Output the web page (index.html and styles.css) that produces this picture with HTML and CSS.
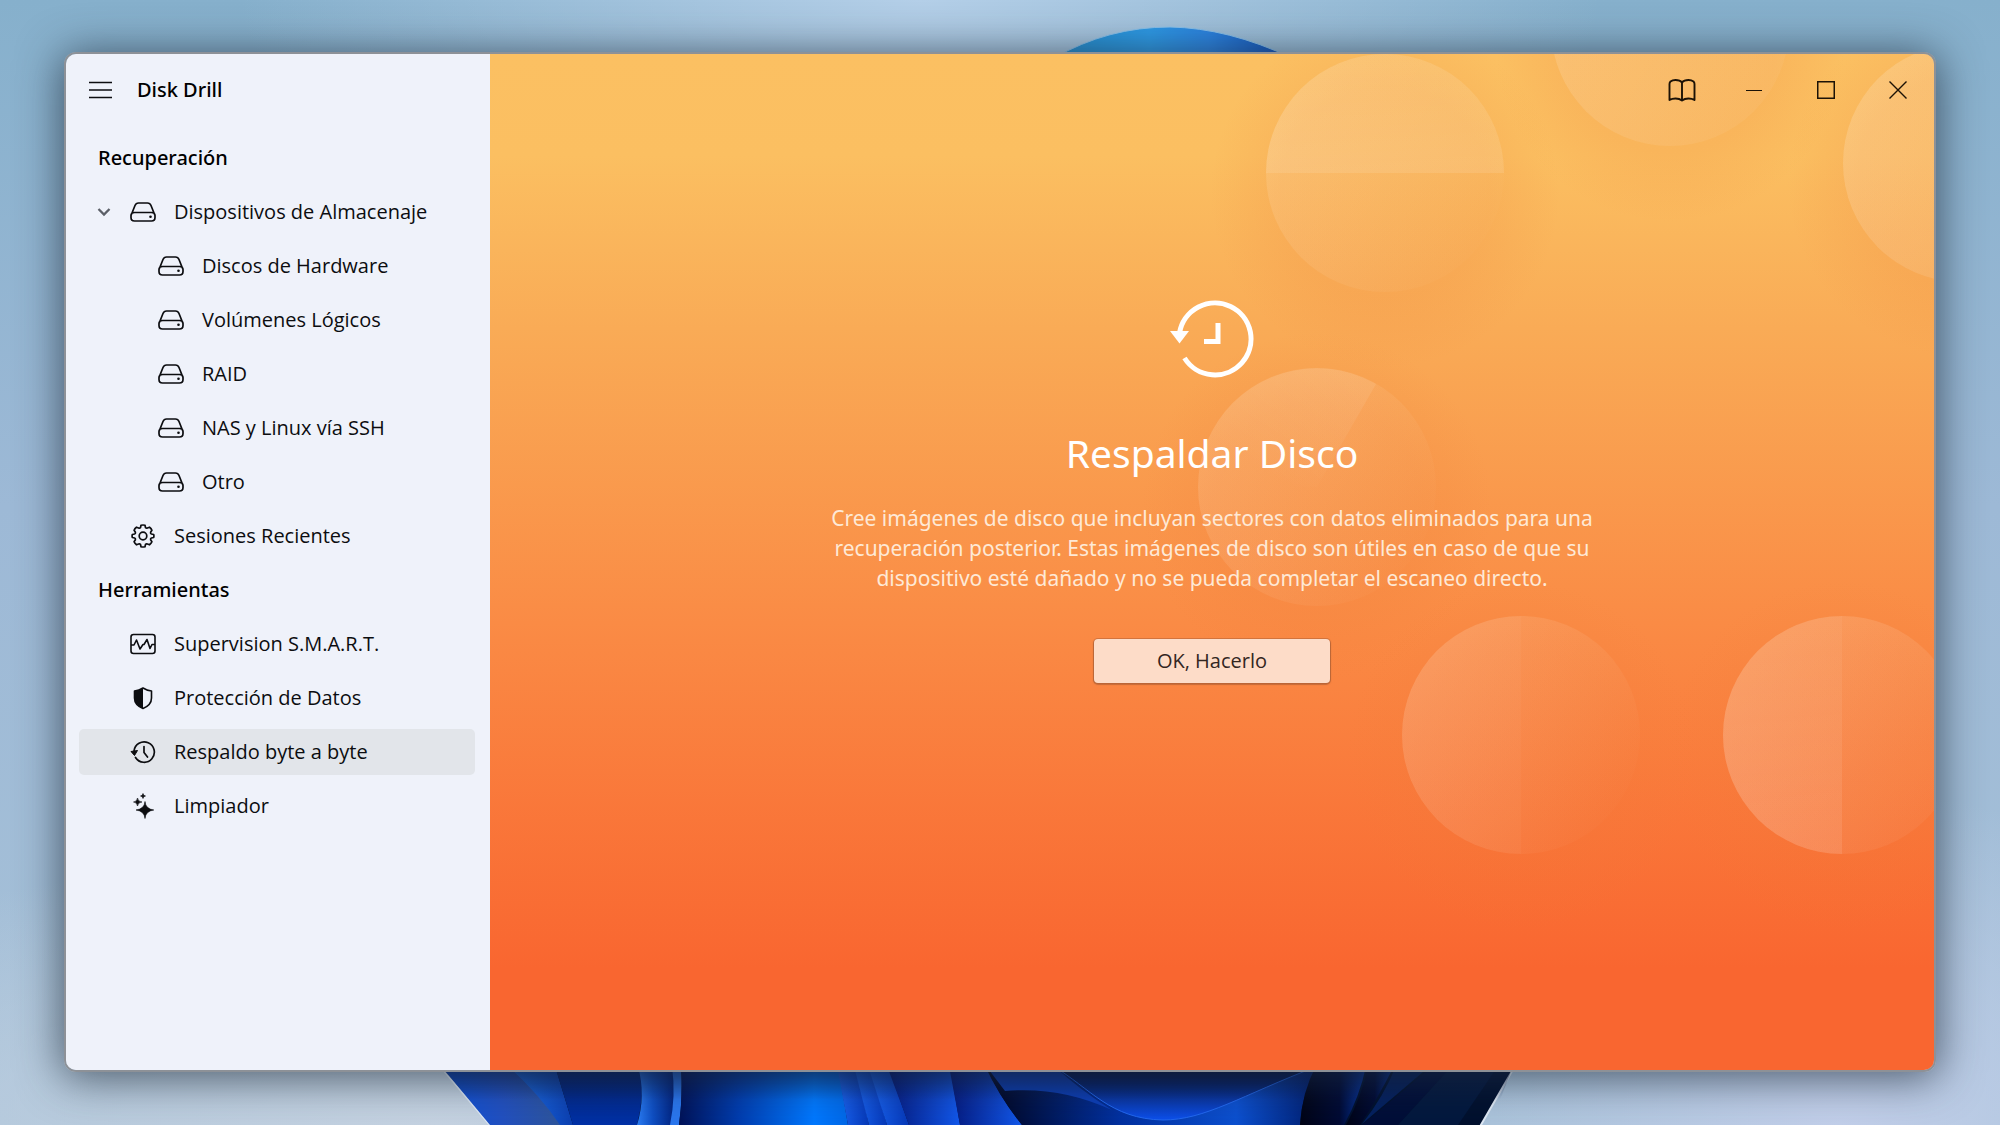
FILE: index.html
```html
<!DOCTYPE html>
<html lang="es">
<head>
<meta charset="utf-8">
<meta name="viewport" content="width=device-width, initial-scale=1">
<title>Disk Drill</title>
<link rel="stylesheet" href="styles.css">
</head>
<body>
<svg class="wallpaper" viewBox="0 0 2000 1125" preserveAspectRatio="xMidYMid slice" aria-hidden="true">
  <defs>
    <linearGradient id="crown"><stop offset="0" stop-color="#248fd0"/><stop offset=".4" stop-color="#2d9be8"/><stop offset=".65" stop-color="#2b84e2"/><stop offset="1" stop-color="#0f4bb4"/></linearGradient>
    <linearGradient id="leaf"><stop offset="0" stop-color="#0a50dc"/><stop offset=".5" stop-color="#2250c0"/><stop offset="1" stop-color="#2f5598"/></linearGradient>
    <linearGradient id="fold"><stop offset="0" stop-color="#1c74f4"/><stop offset="1" stop-color="#0c3fb0"/></linearGradient>
    <linearGradient id="deep" x2="0" y2="1"><stop offset="0" stop-color="#001f70"/><stop offset="1" stop-color="#0031a8"/></linearGradient>
    <linearGradient id="ribbon"><stop offset="0" stop-color="#2a7cf4"/><stop offset=".4" stop-color="#0f4fc4"/><stop offset="1" stop-color="#001e78"/></linearGradient>
    <linearGradient id="glow"><stop offset="0" stop-color="#011258"/><stop offset=".35" stop-color="#003cae"/><stop offset=".8" stop-color="#0078ff"/><stop offset="1" stop-color="#0068e8"/></linearGradient>
    <linearGradient id="pleat"><stop offset="0" stop-color="#1a66f4"/><stop offset="1" stop-color="#0638b8"/></linearGradient>
    <linearGradient id="pleatDark"><stop offset="0" stop-color="#04187c"/><stop offset="1" stop-color="#1258ec"/></linearGradient>
    <linearGradient id="bowl" x2="0" y2="1"><stop offset="0" stop-color="#010a2e"/><stop offset="1" stop-color="#0d50ee"/></linearGradient>
    <linearGradient id="under"><stop offset="0" stop-color="#00031c"/><stop offset=".4" stop-color="#0230a0"/><stop offset=".75" stop-color="#0c50d0"/><stop offset="1" stop-color="#001c6c"/></linearGradient>
    <linearGradient id="blade"><stop offset="0" stop-color="#000416"/><stop offset=".6" stop-color="#000a34"/><stop offset="1" stop-color="#0636a4"/></linearGradient>
    <linearGradient id="shade" x2="0" y2="1"><stop offset="0" stop-color="#001040" stop-opacity=".5"/><stop offset="1" stop-color="#001040" stop-opacity="0"/></linearGradient>
  </defs>
  <path d="M1054 58Q1108 27 1170 27Q1228 28 1292 58Z" fill="url(#crown)" stroke="#8cc4ee" stroke-width="1"/>
  <path d="M440 1066H1515L1478 1130H494Z" fill="#01102e" stroke="#dfe9f5" stroke-width="2"/>
  <path d="M441 1066H512L565 1125H490Z" fill="url(#leaf)"/>
  <path d="M508 1066H555L573 1125H560Q540 1095 508 1066Z" fill="url(#fold)"/>
  <path d="M555 1066H640Q645 1096 637 1125H573Z" fill="url(#deep)"/>
  <path d="M638 1066H674Q680 1096 672 1125H637Q646 1096 638 1066Z" fill="url(#ribbon)"/>
  <path d="M672 1066H681Q683 1096 679 1125H670Q676 1096 672 1066Z" fill="#2a76ee"/>
  <path d="M681 1066H838L848 1125H679Q683 1096 681 1066Z" fill="url(#glow)"/>
  <path d="M837 1066H856L869 1125H848Z" fill="url(#pleat)"/>
  <path d="M854 1066H870L887 1125H869Z" fill="url(#pleat)"/>
  <path d="M868 1066H888L909 1125H887Z" fill="url(#pleat)"/>
  <path d="M887 1066H950L960 1125H909Z" fill="url(#pleatDark)"/>
  <path d="M949 1066H986Q1000 1098 1022 1125H960Z" fill="url(#pleatDark)"/>
  <path d="M985 1066H1320Q1302 1090 1300 1125H1022Q1000 1098 985 1066Z" fill="url(#under)"/>
  <path d="M986 1066H1054Q1080 1090 1112 1110Q1060 1086 1005 1091Z" fill="#0c3eb8"/>
  <path d="M1053 1066H1318C1240 1096 1205 1120 1163 1120C1110 1119 1090 1088 1053 1066Z" fill="url(#bowl)" stroke="#2268f0" stroke-width="1"/>
  <path d="M1316 1066H1366Q1360 1096 1344 1125H1300Q1302 1092 1316 1066Z" fill="url(#blade)"/>
  <path d="M1368 1066H1394Q1378 1098 1360 1125H1346Q1362 1096 1368 1066Z" fill="url(#blade)"/>
  <path d="M1396 1066H1430L1362 1124Q1384 1096 1396 1066Z" fill="#04205e"/>
  <path d="M1452 1066L1398 1125H1362L1426 1072Z" fill="#010e38"/>
  <path d="M1452 1066H1498L1458 1125H1398Z" fill="#03183e"/>
  <path d="M440 1066H1513L1500 1100H470Z" fill="url(#shade)"/>
</svg>

<main class="window">
  <aside class="sidebar">
    <header class="brand">
      <button class="menu" type="button" aria-label="Menú">
        <svg width="24" height="18" viewBox="0 0 24 18"><path d="M0 1.500H23M0 9H23M0 16.500H23" fill="none" stroke="currentColor" stroke-width="1.600"/></svg>
      </button>
      <span class="brand-name">Disk Drill</span>
    </header>

    <svg class="sprite" aria-hidden="true">
      <symbol id="drive" viewBox="0 0 26 20"><path d="M1.200 13L5 3.500Q6 1 8.500 1H17.500Q20 1 21 3.500L24.800 13M4.500 10.500H21.500Q25 10.500 25 13.500V15.500Q25 19 21.500 19H4.500Q1 19 1 15.500V13.500Q1 10.500 4.500 10.500Z" fill="none" stroke="currentColor" stroke-width="1.700"/><circle cx="20.500" cy="14.800" r="1.300" fill="currentColor"/></symbol>
    </svg>

    <nav class="nav">
      <h2>Recuperación</h2>
      <ul>
        <li><a class="item parent" href="#dispositivos"><svg class="chevron" width="14" height="10" viewBox="0 0 14 10"><path d="M1.500 2L7 7.500L12.500 2" fill="none" stroke="currentColor" stroke-width="2.300"/></svg><svg width="26" height="20"><use href="#drive"/></svg>Dispositivos de Almacenaje</a></li>
        <li><a class="item child" href="#discos"><svg width="26" height="20"><use href="#drive"/></svg>Discos de Hardware</a></li>
        <li><a class="item child" href="#volumenes"><svg width="26" height="20"><use href="#drive"/></svg>Volúmenes Lógicos</a></li>
        <li><a class="item child" href="#raid"><svg width="26" height="20"><use href="#drive"/></svg>RAID</a></li>
        <li><a class="item child" href="#nas"><svg width="26" height="20"><use href="#drive"/></svg>NAS y Linux vía SSH</a></li>
        <li><a class="item child" href="#otro"><svg width="26" height="20"><use href="#drive"/></svg>Otro</a></li>
        <li><a class="item" href="#sesiones"><svg width="26" height="26" viewBox="0 0 26 26"><g fill="none" stroke="currentColor" stroke-width="1.700" stroke-linejoin="round"><path d="M10.500 4.600L11 2.300Q13 1.700 15 2.300L15.500 4.600Q16.300 5.400 17.400 5L19.500 4.200Q21.300 5.500 21.900 7.200L20.600 9.200Q20.300 10.500 21.400 11L23.700 11.500Q24.200 13 23.700 14.500L21.400 15Q20.300 15.500 20.600 16.800L21.900 18.800Q21.300 20.500 19.500 21.800L17.400 21Q16.300 20.600 15.500 21.400L15 23.700Q13 24.300 11 23.700L10.500 21.400Q9.700 20.600 8.600 21L6.500 21.800Q4.700 20.500 4.100 18.800L5.400 16.800Q5.700 15.500 4.600 15L2.300 14.500Q1.800 13 2.300 11.500L4.600 11Q5.700 10.500 5.400 9.200L4.100 7.200Q4.700 5.500 6.500 4.200L8.600 5Q9.700 5.400 10.500 4.600Z"/><circle cx="13" cy="13" r="3.800"/></g></svg>Sesiones Recientes</a></li>
      </ul>
      <h2>Herramientas</h2>
      <ul>
        <li><a class="item" href="#smart"><svg width="26" height="22" viewBox="0 0 26 22"><g fill="none" stroke="currentColor" stroke-width="1.600" stroke-linejoin="round"><rect x="1" y="1.500" width="24" height="19" rx="2.500"/><path d="M1 12H4L6.500 7L10 16L13 11.500H14L17 6.500L20 15.500L22 11.500H25"/></g></svg>Supervision S.M.A.R.T.</a></li>
        <li><a class="item" href="#proteccion"><svg width="26" height="24" viewBox="0 0 26 24"><path d="M13 2Q17 4.500 21.500 5V12Q21.500 19 13 22.500Q4.500 19 4.500 12V5Q9 4.500 13 2Z" fill="none" stroke="currentColor" stroke-width="1.600" stroke-linejoin="round"/><path d="M13 2Q9 4.500 4.500 5V12Q4.500 19 13 22.500Z" fill="currentColor"/></svg>Protección de Datos</a></li>
        <li><a class="item current" href="#respaldo" aria-current="page"><svg width="26" height="24" viewBox="0 0 26 24"><path d="M4 11A10.200 10.200 0 1 1 5.500 17.500M14 6.500V12.500L17.500 17" fill="none" stroke="currentColor" stroke-width="1.700" stroke-linecap="round"/><path d="M1 11.500L7.500 10.500L4.500 15.500Z" fill="currentColor" stroke="currentColor" stroke-linejoin="round"/></svg>Respaldo byte a byte</a></li>
        <li><a class="item" href="#limpiador"><svg width="26" height="26" viewBox="0 0 26 26"><path d="M15 8.500Q15.600 16 23.800 17Q15.600 18 15 25.500Q14.400 18 6 17Q14.400 16 15 8.500ZM7.500 5Q7.900 8.700 12 9Q7.900 9.300 7.500 13Q7.100 9.300 3.500 9Q7.100 8.700 7.500 5ZM13 .500Q13.300 2.700 15.500 3Q13.300 3.300 13 5.500Q12.700 3.300 10.500 3Q12.700 2.700 13 .500Z" fill="currentColor" stroke="currentColor" stroke-width=".6"/></svg>Limpiador</a></li>
      </ul>
    </nav>
  </aside>

  <section class="panel">
    <svg class="bubbles" viewBox="0 0 1444 1016" preserveAspectRatio="xMaxYMin slice" aria-hidden="true">
      <defs>
        <linearGradient id="sheen" x1="0" y1=".2" x2="1" y2=".8"><stop offset="0" stop-color="#ffeed8" stop-opacity=".17"/><stop offset="1" stop-color="#ffeed8" stop-opacity="0"/></linearGradient>
        <linearGradient id="half" x1="0" y1="0" x2="0" y2="1"><stop offset="0" stop-color="#fff" stop-opacity=".04"/><stop offset="1" stop-color="#fff" stop-opacity=".1"/></linearGradient>
        <linearGradient id="ray" gradientUnits="userSpaceOnUse" x1="860" y1="330" x2="800" y2="434"><stop offset="0" stop-color="#fff" stop-opacity=".08"/><stop offset="1" stop-color="#fff" stop-opacity="0"/></linearGradient>
        <radialGradient id="halo"><stop offset=".6" stop-color="#ee7c38" stop-opacity=".15"/><stop offset="1" stop-color="#ee7c38" stop-opacity="0"/></radialGradient>
      </defs>
      <g fill="url(#halo)">
        <circle cx="895" cy="139" r="175"/><circle cx="1180" cy="-7" r="175"/><circle cx="1472" cy="129" r="175"/>
        <circle cx="827" cy="453" r="175"/><circle cx="1031" cy="701" r="175"/><circle cx="1352" cy="701" r="175"/>
      </g>
      <g fill="url(#sheen)">
        <circle cx="895" cy="119" r="119"/><circle cx="1180" cy="-27" r="119"/><circle cx="1472" cy="109" r="119"/>
        <circle cx="827" cy="433" r="119"/><circle cx="1031" cy="681" r="119"/><circle cx="1352" cy="681" r="119"/>
      </g>
      <circle cx="1472" cy="109" r="119" fill="#fff" fill-opacity=".05"/>
      <circle cx="1180" cy="-27" r="119" fill="#fff" fill-opacity=".04"/>
      <path d="M776 119A119 119 0 0 1 1014 119Z" fill="url(#half)"/>
      <path d="M827 433L886 330A119 119 0 0 0 708 433Z" fill="url(#ray)"/>
      <path d="M1031 562A119 119 0 0 0 1031 800Z" fill="#fff" fill-opacity=".03"/>
      <path d="M1352 562A119 119 0 0 0 1352 800Z" fill="url(#half)"/>
      <circle cx="1352" cy="681" r="119" fill="#fff" fill-opacity=".03"/>
    </svg>

    <header class="titlebar">
      <button type="button" aria-label="Ayuda"><svg width="28" height="24" viewBox="0 0 28 24"><path d="M14 4.500Q12 2 7.500 2Q4.500 2 2.500 3.500Q1.500 4.500 1.500 6V22Q4 20.500 7.500 20.500Q11.500 20.500 14 22.500Q16.500 20.500 20.500 20.500Q24 20.500 26.500 22V6Q26.500 4.500 25.500 3.500Q23.500 2 20.500 2Q16 2 14 4.500V22" fill="none" stroke="currentColor" stroke-width="1.900" stroke-linejoin="round"/></svg></button>
      <button type="button" aria-label="Minimizar"><svg width="16" height="18" viewBox="0 0 16 18"><path d="M0 9.500H16" stroke="currentColor"/></svg></button>
      <button type="button" aria-label="Maximizar"><svg width="18" height="18" viewBox="0 0 18 18"><path d="M.750 .750H17.250V17.250H.750Z" fill="none" stroke="currentColor" stroke-width="1.500"/></svg></button>
      <button type="button" aria-label="Cerrar"><svg width="18" height="18" viewBox="0 0 18 18"><path d="M.500 .500L17.500 17.500M17.500 .500L.500 17.500" stroke="currentColor" stroke-width="1.400"/></svg></button>
    </header>

    <div class="content">
      <svg class="hero" width="84" height="84" viewBox="0 0 84 84" aria-hidden="true"><path d="M9.500 35A36 36 0 1 1 14.500 60M48 25V43.500H34" fill="none" stroke="currentColor" stroke-width="5"/><path d="M0 33H19L9.500 45.500Z" fill="currentColor"/></svg>
      <h1>Respaldar Disco</h1>
      <p>Cree imágenes de disco que incluyan sectores con datos eliminados para una recuperación posterior. Estas imágenes de disco son útiles en caso de que su dispositivo esté dañado y no se pueda completar el escaneo directo.</p>
      <button class="primary" type="button">OK, Hacerlo</button>
    </div>
  </section>
</main>
</body>
</html>
```
FILE: styles.css
```css
* {
  box-sizing: border-box;
}

body {
  margin: 0;
  min-height: 100vh;
  padding: 52px 64px 53px;
  display: flex;
  position: relative;
  font: 20px/28px "Open Sans", "Noto Sans", sans-serif;
  color: #0c0d10;
  background:
    radial-gradient(ellipse 34% 26% at 46% 0, #b4cfe8, transparent),
    radial-gradient(ellipse 22% 30% at 92% 100%, #c2cfea, transparent),
    radial-gradient(ellipse 44% 24% at 22% 100%, #c6d3e2, transparent),
    linear-gradient(#86b0cc, #9db9d6 45%, #a6c1d8);
}

.wallpaper {
  position: absolute;
  inset: 0;
  width: 100%;
  height: 100%;
}

.sprite {
  display: none;
}

button {
  font: inherit;
  color: inherit;
  border: 0;
  padding: 0;
  background: none;
}

.window {
  flex: 1;
  display: flex;
  position: relative;
  overflow: hidden;
  border: 2px solid #8d9197;
  border-radius: 12px;
  box-shadow: 0 4px 44px 2px rgba(30, 45, 58, .72);
}

.sidebar {
  flex: 0 0 424px;
  background: #eff2fa;
}

.brand {
  height: 72px;
  padding-left: 23px;
  display: flex;
  align-items: center;
  gap: 24px;
}

.menu {
  display: flex;
}

.brand-name,
h2 {
  font-family: "Noto Sans", sans-serif;
  font-size: 20px;
  font-weight: 500;
  color: #000;
}

.nav {
  padding: 9px 15px 9px 13px;
}

.nav ul {
  margin: 8px 0;
  padding: 0;
  list-style: none;
  display: grid;
  gap: 8px;
}

h2 {
  margin: 0;
  padding-left: 19px;
  line-height: 46px;
}

.item {
  height: 46px;
  padding-left: 51px;
  display: flex;
  align-items: center;
  gap: 18px;
  border-radius: 5px;
  color: inherit;
  text-decoration: none;
}

.item.parent {
  padding-left: 18px;
}

.item.child {
  padding-left: 79px;
}

.item.current {
  background: #e2e5ea;
}

.chevron {
  margin-right: 1px;
  color: #5c6068;
}

.panel {
  flex: 1;
  min-width: 0;
  position: relative;
  background: linear-gradient(#fbc062 0, #fbbf61 10%, #f9ab56 27%, #fa8b45 56%, #f96630 90%);
}

.bubbles {
  position: absolute;
  inset: 0;
  width: 100%;
  height: 100%;
}

.titlebar {
  position: relative;
  height: 72px;
  display: flex;
  justify-content: flex-end;
  color: #1c1206;
}

.titlebar button {
  width: 72px;
  display: flex;
  align-items: center;
  justify-content: center;
}

.content {
  position: relative;
  padding: 172px 24px 48px;
  display: flex;
  flex-direction: column;
  align-items: center;
  text-align: center;
  color: #fff;
}

h1 {
  margin: 45px 0 24px;
  font: 400 39px/52px "Noto Sans", sans-serif;
}

p {
  margin: 0 0 46px;
  max-width: 800px;
  font: 21px/30px "Noto Sans", sans-serif;
  color: #fee9d6;
}

.primary {
  width: 236px;
  height: 44px;
  border-radius: 4px;
  background: #fddcc8;
  color: #33261f;
  box-shadow: 0 0 0 1px rgba(170, 95, 55, .45), 0 1px 1px 1px rgba(150, 80, 45, .5);
}
```
